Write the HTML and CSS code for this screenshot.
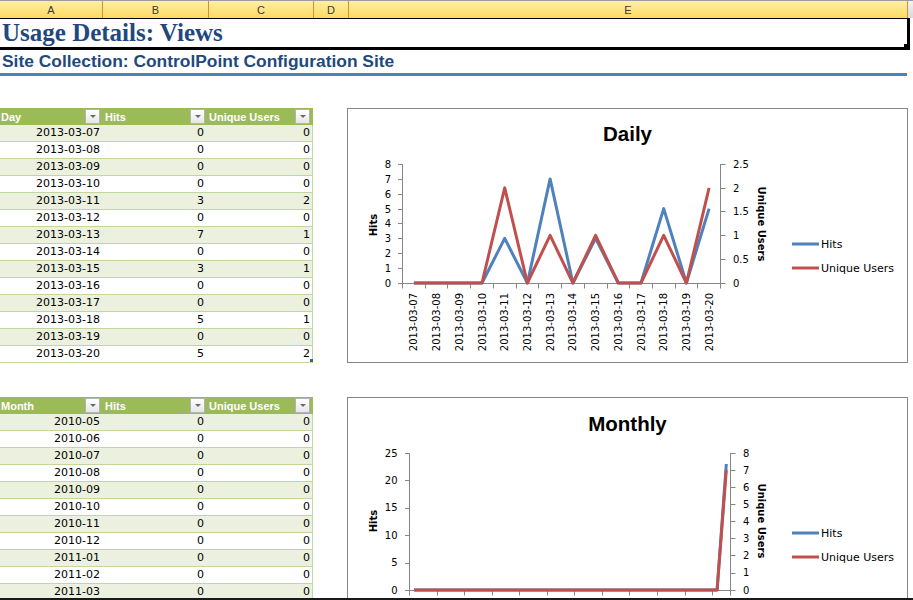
FILE: index.html
```html
<!DOCTYPE html>
<html lang="en">
<head>
<meta charset="utf-8">
<title>Usage Details: Views</title>
<link rel="stylesheet" href="styles.css">
</head>
<body>
<div class="sheet">
  <div class="colbar">
    <div class="col col-a">A</div>
    <div class="col col-b">B</div>
    <div class="col col-c">C</div>
    <div class="col col-d">D</div>
    <div class="col col-e">E</div>
    <div class="col-rest"></div>
  </div>

  <div class="title-cell">
    <h1 class="title">Usage Details: Views</h1>
    <span class="fill-handle"></span>
  </div>
  <div class="subtitle">Site Collection: ControlPoint Configuration Site</div>

  <div class="section daily">
    <div class="tbl">
      <div class="tr head">
        <div class="th">Day<span class="dd"></span></div>
        <div class="th th-b">Hits<span class="dd"></span></div>
        <div class="th th-c">Unique Users<span class="dd"></span></div>
      </div>
      <div class="tr alt"><div class="td">2013-03-07</div><div class="td num">0</div><div class="td">0</div></div>
      <div class="tr"><div class="td">2013-03-08</div><div class="td num">0</div><div class="td">0</div></div>
      <div class="tr alt"><div class="td">2013-03-09</div><div class="td num">0</div><div class="td">0</div></div>
      <div class="tr"><div class="td">2013-03-10</div><div class="td num">0</div><div class="td">0</div></div>
      <div class="tr alt"><div class="td">2013-03-11</div><div class="td num">3</div><div class="td">2</div></div>
      <div class="tr"><div class="td">2013-03-12</div><div class="td num">0</div><div class="td">0</div></div>
      <div class="tr alt"><div class="td">2013-03-13</div><div class="td num">7</div><div class="td">1</div></div>
      <div class="tr"><div class="td">2013-03-14</div><div class="td num">0</div><div class="td">0</div></div>
      <div class="tr alt"><div class="td">2013-03-15</div><div class="td num">3</div><div class="td">1</div></div>
      <div class="tr"><div class="td">2013-03-16</div><div class="td num">0</div><div class="td">0</div></div>
      <div class="tr alt"><div class="td">2013-03-17</div><div class="td num">0</div><div class="td">0</div></div>
      <div class="tr"><div class="td">2013-03-18</div><div class="td num">5</div><div class="td">1</div></div>
      <div class="tr alt"><div class="td">2013-03-19</div><div class="td num">0</div><div class="td">0</div></div>
      <div class="tr last"><div class="td">2013-03-20</div><div class="td num">5</div><div class="td">2</div></div>
    </div>

    <div class="chart">
      <svg width="559" height="253" viewBox="0 0 559 253">
        <text class="ctitle" x="279.5" y="32" text-anchor="middle">Daily</text>
        <path class="axis" d="M54.5 55V175 M50 55.5H54 M50 70.5H54 M50 85.5H54 M50 100.5H54 M50 114.5H54 M50 129.5H54 M50 144.5H54 M50 159.5H54 M50 174.5H54"/>
        <g class="ylab" text-anchor="end">
          <text x="43" y="55" dy=".35em">8</text>
          <text x="43" y="70" dy=".35em">7</text>
          <text x="43" y="85" dy=".35em">6</text>
          <text x="43" y="100" dy=".35em">5</text>
          <text x="43" y="114.5" dy=".35em">4</text>
          <text x="43" y="129.5" dy=".35em">3</text>
          <text x="43" y="144" dy=".35em">2</text>
          <text x="43" y="159" dy=".35em">1</text>
          <text x="43" y="174" dy=".35em">0</text>
        </g>
        <path class="axis" d="M372.5 55V175 M373 55.5H377.5 M373 79.5H377.5 M373 102.5H377.5 M373 126.5H377.5 M373 150.5H377.5 M373 174.5H377.5"/>
        <g class="ylab">
          <text x="385" y="55" dy=".35em">2.5</text>
          <text x="385" y="79" dy=".35em">2</text>
          <text x="385" y="102.6" dy=".35em">1.5</text>
          <text x="385" y="126.4" dy=".35em">1</text>
          <text x="385" y="150.2" dy=".35em">0.5</text>
          <text x="385" y="174" dy=".35em">0</text>
        </g>
        <path class="axis" d="M54 174.5H373 M54.5 174V179.5 M77.5 174V179.5 M99.5 174V179.5 M122.5 174V179.5 M145.5 174V179.5 M168.5 174V179.5 M190.5 174V179.5 M213.5 174V179.5 M236.5 174V179.5 M259.5 174V179.5 M281.5 174V179.5 M304.5 174V179.5 M327.5 174V179.5 M349.5 174V179.5 M372.5 174V179.5"/>
        <g class="xlab" text-anchor="end">
          <text transform="translate(65.9 184) rotate(-90)" dy=".35em">2013-03-07</text>
          <text transform="translate(88.6 184) rotate(-90)" dy=".35em">2013-03-08</text>
          <text transform="translate(111.3 184) rotate(-90)" dy=".35em">2013-03-09</text>
          <text transform="translate(134 184) rotate(-90)" dy=".35em">2013-03-10</text>
          <text transform="translate(156.7 184) rotate(-90)" dy=".35em">2013-03-11</text>
          <text transform="translate(179.4 184) rotate(-90)" dy=".35em">2013-03-12</text>
          <text transform="translate(202.1 184) rotate(-90)" dy=".35em">2013-03-13</text>
          <text transform="translate(224.9 184) rotate(-90)" dy=".35em">2013-03-14</text>
          <text transform="translate(247.6 184) rotate(-90)" dy=".35em">2013-03-15</text>
          <text transform="translate(270.3 184) rotate(-90)" dy=".35em">2013-03-16</text>
          <text transform="translate(293 184) rotate(-90)" dy=".35em">2013-03-17</text>
          <text transform="translate(315.7 184) rotate(-90)" dy=".35em">2013-03-18</text>
          <text transform="translate(338.4 184) rotate(-90)" dy=".35em">2013-03-19</text>
          <text transform="translate(361.1 184) rotate(-90)" dy=".35em">2013-03-20</text>
        </g>
        <text class="atitle" transform="translate(25 116) rotate(-90)" text-anchor="middle" dy=".35em">Hits</text>
        <text class="atitle" transform="translate(413 115) rotate(90)" text-anchor="middle" dy=".35em">Unique Users</text>
        <polyline class="s-hits" points="65.9,174 88.6,174 111.3,174 134,174 156.7,129.4 179.4,174 202.1,69.9 224.9,174 247.6,129.4 270.3,174 293,174 315.7,99.6 338.4,174 361.1,99.6"/>
        <polyline class="s-users" points="65.9,174 88.6,174 111.3,174 134,174 156.7,78.8 179.4,174 202.1,126.4 224.9,174 247.6,126.4 270.3,174 293,174 315.7,126.4 338.4,174 361.1,78.8"/>
        <path class="s-hits" d="M444 135H471"/>
        <text class="legend" x="473" y="135" dy=".35em">Hits</text>
        <path class="s-users" d="M444 159H471"/>
        <text class="legend" x="473" y="159" dy=".35em">Unique Users</text>
      </svg>
    </div>
  </div>

  <div class="section monthly">
    <div class="tbl">
      <div class="tr head">
        <div class="th">Month<span class="dd"></span></div>
        <div class="th th-b">Hits<span class="dd"></span></div>
        <div class="th th-c">Unique Users<span class="dd"></span></div>
      </div>
      <div class="tr alt"><div class="td">2010-05</div><div class="td num">0</div><div class="td">0</div></div>
      <div class="tr"><div class="td">2010-06</div><div class="td num">0</div><div class="td">0</div></div>
      <div class="tr alt"><div class="td">2010-07</div><div class="td num">0</div><div class="td">0</div></div>
      <div class="tr"><div class="td">2010-08</div><div class="td num">0</div><div class="td">0</div></div>
      <div class="tr alt"><div class="td">2010-09</div><div class="td num">0</div><div class="td">0</div></div>
      <div class="tr"><div class="td">2010-10</div><div class="td num">0</div><div class="td">0</div></div>
      <div class="tr alt"><div class="td">2010-11</div><div class="td num">0</div><div class="td">0</div></div>
      <div class="tr"><div class="td">2010-12</div><div class="td num">0</div><div class="td">0</div></div>
      <div class="tr alt"><div class="td">2011-01</div><div class="td num">0</div><div class="td">0</div></div>
      <div class="tr"><div class="td">2011-02</div><div class="td num">0</div><div class="td">0</div></div>
      <div class="tr alt"><div class="td">2011-03</div><div class="td num">0</div><div class="td">0</div></div>
    </div>

    <div class="chart">
      <svg width="559" height="253" viewBox="0 0 559 253">
        <text class="ctitle" x="279.5" y="33" text-anchor="middle">Monthly</text>
        <path class="axis" d="M61.5 55V193 M57 55.5H61 M57 82.5H61 M57 110.5H61 M57 137.5H61 M57 165.5H61 M57 192.5H61"/>
        <g class="ylab" text-anchor="end">
          <text x="49.5" y="55" dy=".35em">25</text>
          <text x="49.5" y="82.4" dy=".35em">20</text>
          <text x="49.5" y="109.8" dy=".35em">15</text>
          <text x="49.5" y="137.2" dy=".35em">10</text>
          <text x="49.5" y="164.6" dy=".35em">5</text>
          <text x="49.5" y="192" dy=".35em">0</text>
        </g>
        <path class="axis" d="M382.5 55V193 M383 55.5H387.5 M383 72.5H387.5 M383 89.5H387.5 M383 106.5H387.5 M383 123.5H387.5 M383 140.5H387.5 M383 157.5H387.5 M383 175.5H387.5 M383 192.5H387.5"/>
        <g class="ylab">
          <text x="395" y="55" dy=".35em">8</text>
          <text x="395" y="72.1" dy=".35em">7</text>
          <text x="395" y="89.25" dy=".35em">6</text>
          <text x="395" y="106.4" dy=".35em">5</text>
          <text x="395" y="123.5" dy=".35em">4</text>
          <text x="395" y="140.6" dy=".35em">3</text>
          <text x="395" y="157.75" dy=".35em">2</text>
          <text x="395" y="174.9" dy=".35em">1</text>
          <text x="395" y="192" dy=".35em">0</text>
        </g>
        <path class="axis" d="M61 192.5H383 M61.5 192V197.5 M89.5 192V197.5 M116.5 192V197.5 M144.5 192V197.5 M171.5 192V197.5 M199.5 192V197.5 M226.5 192V197.5 M254.5 192V197.5 M281.5 192V197.5 M309.5 192V197.5 M337.5 192V197.5 M364.5 192V197.5 M382.5 192V197.5"/>
        <text class="atitle" transform="translate(25 123) rotate(-90)" text-anchor="middle" dy=".35em">Hits</text>
        <text class="atitle" transform="translate(413 123) rotate(90)" text-anchor="middle" dy=".35em">Unique Users</text>
        <polyline class="s-hits" points="66.1,192 369.1,192 378.3,66"/>
        <polyline class="s-users" points="66.1,192 369.1,192 378.3,72.1"/>
        <path class="s-hits" d="M444 135H471"/>
        <text class="legend" x="473" y="135" dy=".35em">Hits</text>
        <path class="s-users" d="M444 159H471"/>
        <text class="legend" x="473" y="159" dy=".35em">Unique Users</text>
      </svg>
    </div>
  </div>
</div>
<div class="bottom-edge"></div>
</body>
</html>
```
FILE: styles.css
```css
html, body {
  margin: 0;
  padding: 0;
}
body {
  width: 913px;
  height: 600px;
  overflow: hidden;
  background: #ffffff;
  font-family: "DejaVu Sans", sans-serif;
}
.sheet {
  height: 598px;
  overflow: hidden;
}
.bottom-edge {
  height: 2px;
  background: #1a1a1a;
}

/* column header bar */
.colbar {
  display: flex;
  height: 18px;
  box-sizing: border-box;
  border-top: 1px solid #9c9c9c;
  background: linear-gradient(#fdefa6, #ffda60);
  font: 11px "Liberation Sans", Arial, sans-serif;
  color: #3a3a3a;
}
.col {
  display: flex;
  align-items: center;
  justify-content: center;
  border-right: 1px solid #c8953f;
}
.col-a { width: 102px; }
.col-b { width: 105px; }
.col-c { width: 104px; }
.col-d { width: 34px; }
.col-e { width: 558px; }
.col-rest {
  flex: 1;
  background: linear-gradient(#f2f2f2, #d9d9d9);
}

/* title */
.title-cell {
  position: relative;
  width: 910px;
  height: 32px;
  box-sizing: border-box;
  border-top: 1px solid #000;
  border-bottom: 3px solid #000;
  border-right: 3px solid #000;
}
.title {
  margin: 0;
  padding-left: 2px;
  font: bold 25px/28px "Liberation Serif", "Times New Roman", serif;
  color: #1f497d;
}
.fill-handle {
  position: absolute;
  right: -3px;
  bottom: -3px;
  width: 6px;
  height: 6px;
  background: #000;
}
.subtitle {
  width: 905px;
  height: 23px;
  padding-left: 2px;
  border-bottom: 3px solid #4f81bd;
  font: bold 17.4px/23px "Liberation Sans", Arial, sans-serif;
  color: #1f497d;
}

/* sections */
.section {
  display: grid;
  grid-template-columns: 313px 561px;
  column-gap: 34px;
  align-items: start;
}
.daily { margin-top: 32px; }
.monthly { margin-top: 34px; }

/* tables */
.tbl {
  display: flex;
  flex-direction: column;
}
.tr {
  display: grid;
  grid-template-columns: 102px 105px 105px;
  height: 17px;
  box-sizing: border-box;
  border-right: 1px solid #c4d79b;
  border-bottom: 1px solid #c4d79b;
  background: #ffffff;
}
.tr.alt { background: #ebf1de; }
.tr.head {
  background: #9bbb59;
  border-bottom: none;
  border-right: 1px solid #9bbb59;
}
.tr.last { position: relative; }
.tr.last::after {
  content: "";
  position: absolute;
  right: -1px;
  bottom: 0;
  width: 3px;
  height: 3px;
  background: #3b5ba5;
}
.th {
  display: flex;
  align-items: center;
  justify-content: space-between;
  padding-left: 1px;
  font: bold 11px "Liberation Sans", Arial, sans-serif;
  color: #ffffff;
}
.th-b { padding-left: 3px; }
.th-c { padding-left: 2px; }
.dd {
  position: relative;
  width: 13px;
  height: 13px;
  margin-right: 2px;
  border: 1px solid #b3b3b3;
  background: linear-gradient(#ffffff, #e6e6e6);
}
.dd::after {
  content: "";
  position: absolute;
  left: 4px;
  top: 5px;
  border-left: 3px solid transparent;
  border-right: 3px solid transparent;
  border-top: 3px solid #6a6a6a;
}
.td {
  padding-right: 2px;
  text-align: right;
  font: 11px/16px "DejaVu Sans", Verdana, sans-serif;
  color: #000;
}
.td.num { padding-right: 3px; }

/* charts */
.chart {
  width: 561px;
  height: 255px;
  box-sizing: border-box;
  border: 1px solid #868686;
  background: #fff;
}
.chart svg { display: block; }
.ctitle {
  font: bold 20.5px "Liberation Sans", Arial, sans-serif;
  fill: #000;
}
.axis {
  fill: none;
  stroke: #868686;
  stroke-width: 1;
}
.ylab, .xlab {
  font: 10px "DejaVu Sans", Verdana, sans-serif;
  fill: #000;
}
.atitle {
  font: bold 10px "DejaVu Sans", Verdana, sans-serif;
  fill: #000;
}
.legend {
  font: 11px "DejaVu Sans", Verdana, sans-serif;
  fill: #000;
}
.s-hits, .s-users {
  fill: none;
  stroke-width: 3;
  stroke-linejoin: round;
}
.s-hits { stroke: #4f81bd; }
.s-users { stroke: #c0504d; }
```
